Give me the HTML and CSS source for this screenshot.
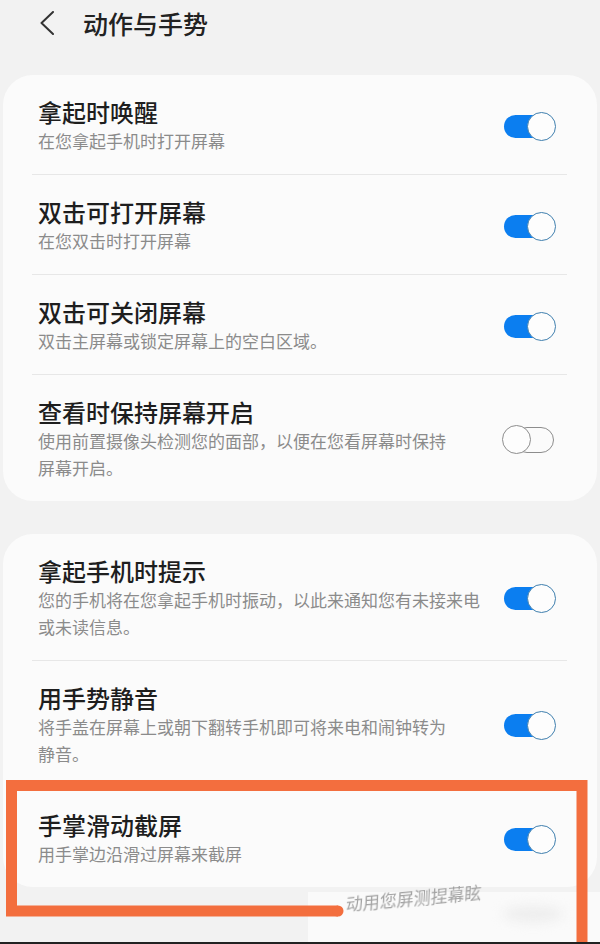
FILE: index.html
```html
<!DOCTYPE html>
<html lang="zh-CN">
<head>
  <meta charset="UTF-8">
  <meta name="viewport" content="width=device-width, initial-scale=1.0">
  <title>动作与手势</title>
  <link rel="stylesheet" href="styles.css">
</head>
<body>
  <div class="screen">
    <header class="topbar">
      <svg class="back" width="14" height="24" viewBox="0 0 14 24">
        <polyline points="13,1 1.5,12 13,23" fill="none" stroke="#333" stroke-width="2" stroke-linecap="round" stroke-linejoin="round"/>
      </svg>
      <h1>动作与手势</h1>
    </header>

    <section class="card">
      <div class="row">
        <div class="text">
          <div class="title">拿起时唤醒</div>
          <div class="desc">在您拿起手机时打开屏幕</div>
        </div>
        <span class="switch on"></span>
      </div>
      <div class="row">
        <div class="text">
          <div class="title">双击可打开屏幕</div>
          <div class="desc">在您双击时打开屏幕</div>
        </div>
        <span class="switch on"></span>
      </div>
      <div class="row">
        <div class="text">
          <div class="title">双击可关闭屏幕</div>
          <div class="desc">双击主屏幕或锁定屏幕上的空白区域。</div>
        </div>
        <span class="switch on"></span>
      </div>
      <div class="row">
        <div class="text">
          <div class="title">查看时保持屏幕开启</div>
          <div class="desc">使用前置摄像头检测您的面部，以便在您看屏幕时保持<br>屏幕开启。</div>
        </div>
        <span class="switch off"></span>
      </div>
    </section>

    <section class="card second">
      <div class="row">
        <div class="text">
          <div class="title">拿起手机时提示</div>
          <div class="desc">您的手机将在您拿起手机时振动，以此来通知您有未接来电<br>或未读信息。</div>
        </div>
        <span class="switch on"></span>
      </div>
      <div class="row">
        <div class="text">
          <div class="title">用手势静音</div>
          <div class="desc">将手盖在屏幕上或朝下翻转手机即可将来电和闹钟转为<br>静音。</div>
        </div>
        <span class="switch on"></span>
      </div>
      <div class="row">
        <div class="text">
          <div class="title">手掌滑动截屏</div>
          <div class="desc">用手掌边沿滑过屏幕来截屏</div>
        </div>
        <span class="switch on"></span>
      </div>
    </section>

    <!-- patch left over from a removed watermark -->
    <div class="patch">
      <span class="smudge"></span>
      <span class="ghost">动用您屏测捏幕眩</span>
    </div>

    <!-- orange highlight drawn on top of the screenshot -->
    <svg class="mark" width="600" height="944" viewBox="0 0 600 944">
      <polyline points="582,944 582,785.5 11.5,785.5 11.5,911 338,911" fill="none" stroke="#f36e3e" stroke-width="11" stroke-linejoin="miter"/>
      <circle cx="338" cy="911" r="5.5" fill="#f36e3e"/>
    </svg>

    <div class="edge"></div>
  </div>
</body>
</html>
```

FILE: styles.css
```css
body {
  margin: 0;
  background: #f2f2f2;
  font-family: "Noto Sans CJK SC", "Noto Sans", sans-serif;
}

.screen {
  position: relative;
  width: 600px;
  height: 944px;
  overflow: hidden;
  background: #f2f2f2;
}

.topbar {
  display: flex;
  align-items: center;
  height: 46px;
  padding-left: 40px;
}

.topbar h1 {
  margin: 0 0 0 29px;
  font-size: 25px;
  font-weight: 500;
  line-height: 30px;
  color: #222;
}

.card {
  margin: 29px 3px 0;
  padding: 0 30px 0 29px;
  background: #fbfbfb;
  border-radius: 30px;
}

.card.second {
  margin-top: 33px;
}

.row {
  display: flex;
  align-items: center;
  padding: 22px 11px 20px 6px;
  border-bottom: 1px solid #e7e7e7;
}

.row:last-child {
  border-bottom: none;
}

.text {
  flex: 1;
  min-width: 0;
}

.title {
  font-size: 24px;
  font-weight: 500;
  line-height: 30px;
  color: #1e1e1e;
}

.desc {
  font-size: 17px;
  line-height: 27px;
  color: #8b8b8b;
}

.switch {
  position: relative;
  flex: none;
  width: 54px;
  height: 30px;
}

.switch::before,
.switch::after {
  content: "";
  position: absolute;
  box-sizing: border-box;
}

.switch::before {
  left: 2px;
  right: 2px;
  top: 4px;
  height: 23px;
  border-radius: 12px;
}

.switch::after {
  top: 1px;
  width: 29px;
  height: 29px;
  border-radius: 50%;
  background: #fdfdfd;
}

.switch.on::before {
  background: #0b7ef0;
}

.switch.on::after {
  right: 0;
  border: 1.5px solid #3f7fae;
}

.switch.off::before {
  left: 12px;
  right: 2px;
  top: 3px;
  height: 26px;
  border: 1.5px solid #8d8d8d;
  border-radius: 13px;
  background: #fbfbfb;
}

.switch.off::after {
  left: 0;
  border: 1.5px solid #8d8d8d;
}

.patch {
  position: absolute;
  left: 308px;
  top: 892px;
  width: 292px;
  height: 52px;
  background: #fafafa;
}

.smudge {
  position: absolute;
  left: 195px;
  top: 14px;
  width: 60px;
  height: 16px;
  border-radius: 50%;
  background: #ededed;
  filter: blur(6px);
}

.ghost {
  position: absolute;
  left: 38px;
  top: 1px;
  font-size: 17px;
  line-height: 22px;
  color: #a2a2a2;
  transform: rotate(-5deg) skewX(-8deg);
  transform-origin: left center;
  filter: blur(0.4px);
}

.edge {
  position: absolute;
  left: 0;
  right: 0;
  bottom: 0;
  height: 2px;
  background: #222;
}

.mark {
  position: absolute;
  left: 0;
  top: 0;
}
```
